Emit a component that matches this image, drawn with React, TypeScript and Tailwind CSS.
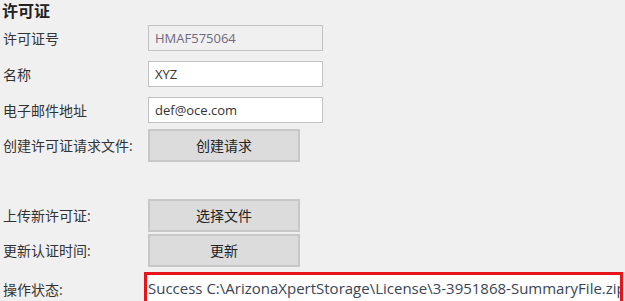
export default function App() {
  const font = { fontFamily: '"Open Sans", "Noto Sans CJK SC", sans-serif' };
  const labelCls = "w-[148px] shrink-0 pl-[3px] text-[14px] text-[#333]";
  const inputCls =
    "h-[26px] w-[175px] border border-[#c2c2c2] px-[6px] text-[13px] leading-[24px]";
  const btnCls =
    "flex h-[33px] w-[152px] items-center justify-center border-2 border-[#c8c8c8] bg-[#dcdcdc] text-[14px] text-[#222]";

  return (
    <div className="h-[301px] w-[625px] overflow-hidden bg-[#f0f0f0]" style={font}>
      <div className="flex flex-col">
        <div className="pl-[2px] text-[16px] font-bold leading-[22px] text-[#222]">许可证</div>

        <div className="mt-[3px] flex items-center">
          <div className={labelCls}>许可证号</div>
          <div className={`${inputCls} bg-[#f0f0f0] text-[#6e6a80]`}>HMAF575064</div>
        </div>

        <div className="mt-[10px] flex items-center">
          <div className={labelCls}>名称</div>
          <div className={`${inputCls} bg-white text-[#333]`}>XYZ</div>
        </div>

        <div className="mt-[10px] flex items-center">
          <div className={labelCls}>电子邮件地址</div>
          <div className={`${inputCls} bg-white text-[#333]`}>def@oce.com</div>
        </div>

        <div className="mt-[6px] flex items-center">
          <div className={labelCls}>创建许可证请求文件:</div>
          <button className={btnCls}>创建请求</button>
        </div>

        <div className="mt-[37px] flex items-center">
          <div className={labelCls}>上传新许可证:</div>
          <button className={btnCls}>选择文件</button>
        </div>

        <div className="mt-[2px] flex items-center">
          <div className={labelCls}>更新认证时间:</div>
          <button className={btnCls}>更新</button>
        </div>

        <div className="mt-[5px] flex items-center">
          <div className="w-[144px] shrink-0 pl-[3px] text-[14px] text-[#333]">操作状态:</div>
          <div className="h-[34px] w-[479px] overflow-hidden whitespace-nowrap border-[3px] border-[#e8141c] bg-white pl-[1px] text-[15px] leading-[26px] text-[#3a4556]">
            Success C:\ArizonaXpertStorage\License\3-3951868-SummaryFile.zip
          </div>
        </div>
      </div>
    </div>
  );
}
